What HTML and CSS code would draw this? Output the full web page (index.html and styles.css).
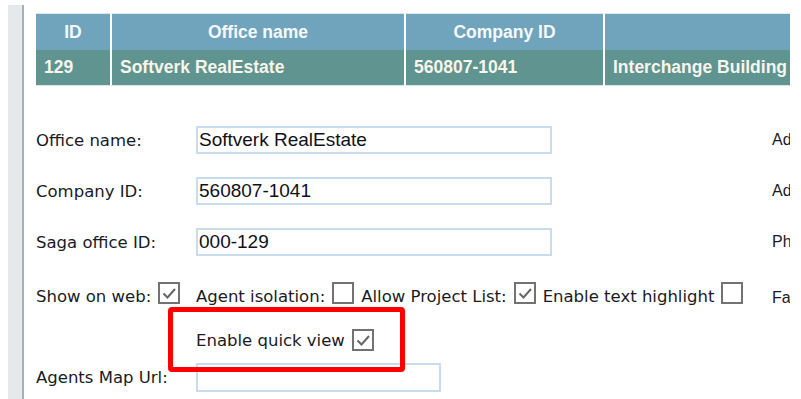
FILE: index.html
```html
<!DOCTYPE html>
<html>
<head>
	<title>Office settings</title>
	<link rel="stylesheet" href="styles.css">
</head>
<body>
	<div class="page">
		<div class="rail"></div>
		<div class="main">
			<table class="offices">
				<colgroup>
					<col class="c_id">
					<col class="c_name">
					<col class="c_company">
					<col class="c_address">
				</colgroup>
				<thead>
					<tr>
						<th>ID</th>
						<th>Office name</th>
						<th>Company ID</th>
						<th></th>
					</tr>
				</thead>
				<tbody>
					<tr>
						<td>129</td>
						<td>Softverk RealEstate</td>
						<td>560807-1041</td>
						<td>Interchange Building</td>
					</tr>
				</tbody>
			</table>

			<div class="form">
				<div class="row first">
					<label class="lbl">Office name:</label>
					<div class="field"><input class="text" type="text" value="Softverk RealEstate"></div>
					<label class="side">Address:</label>
				</div>
				<div class="row">
					<label class="lbl">Company ID:</label>
					<div class="field"><input class="text" type="text" value="560807-1041"></div>
					<label class="side">Address 2:</label>
				</div>
				<div class="row">
					<label class="lbl">Saga office ID:</label>
					<div class="field"><input class="text" type="text" value="000-129"></div>
					<label class="side">Phone:</label>
				</div>
				<div class="row checks">
					<div class="inline">
						<span>Show on web:</span>
						<span class="box on"><svg width="19" height="19" viewBox="0 0 19 19"><path d="M3.5 9.5 L7.5 13.5 L15 5" fill="none" stroke="#666" stroke-width="2"/></svg></span>
					</div>
					<div class="inline">
						<span>Agent isolation:</span>
						<span class="box"></span>
						<span>Allow Project List:</span>
						<span class="box on"><svg width="19" height="19" viewBox="0 0 19 19"><path d="M3.5 9.5 L7.5 13.5 L15 5" fill="none" stroke="#666" stroke-width="2"/></svg></span>
						<span>Enable text highlight</span>
						<span class="box"></span>
					</div>
					<label class="side">Fax:</label>
				</div>
				<div class="row quick">
					<div></div>
					<div class="inline">
						<span>Enable quick view</span>
						<span class="box on"><svg width="19" height="19" viewBox="0 0 19 19"><path d="M3.5 9.5 L7.5 13.5 L15 5" fill="none" stroke="#666" stroke-width="2"/></svg></span>
					</div>
				</div>
				<div class="row map">
					<label class="lbl">Agents Map Url:</label>
					<div class="field"><input class="text short" type="text" value=""></div>
				</div>
			</div>

			<div class="highlight"></div>
		</div>
	</div>
</body>
</html>
```

FILE: styles.css
```css
body {
	margin: 0;
	background-color: white;
}

.page {
	display: flex;
	height: 399px;
	box-sizing: border-box;
	padding-top: 5px;
	padding-left: 8px;
	overflow: hidden;
}

.rail {
	width: 14px;
	background-color: #e7e8ea;
	border-right: 2px solid #9fb0bf;
}

.main {
	position: relative;
	width: 754px;
	margin-left: 12px;
	padding-top: 8px;
	overflow: hidden;
}

/* office list */

table.offices {
	table-layout: fixed;
	width: 900px;
	border-collapse: separate;
	border-spacing: 0;
	font-family: "Liberation Sans", Arial, sans-serif;
	font-size: 17.5px;
	font-weight: bold;
}

.c_id { width: 74px; }
.c_name { width: 294px; }
.c_company { width: 199px; }
.c_address { width: 333px; }

.offices th, .offices td {
	padding: 0 0 0 8px;
	white-space: nowrap;
	overflow: hidden;
}

.offices th + th, .offices td + td {
	border-left: 2px solid white;
}

.offices thead th {
	height: 36px;
	padding: 0;
	text-align: center;
	color: #f6f9fb;
	background-color: #70a4bc;
	border-top: 1px solid #dde8ee;
}

.offices tbody td {
	height: 35px;
	text-align: left;
	color: #f8f5ea;
	background-color: #5f9490;
	border-bottom: 1px solid #dfe4e3;
}

/* form */

.form {
	font-family: "DejaVu Sans", Verdana, sans-serif;
	font-size: 16.5px;
	color: #1a1a24;
}

.row {
	display: grid;
	grid-template-columns: 160px 576px 1fr;
	align-items: center;
	margin-top: 23px;
}

.row.first {
	margin-top: 40px;
}

.row.checks {
	margin-top: 26px;
	align-items: end;
}

.row.quick {
	margin-top: 22px;
	align-items: end;
}

.row.map {
	margin-top: 12px;
}

.side {
	font-family: "Liberation Sans", Arial, sans-serif;
	font-size: 16px;
	white-space: nowrap;
}

.text {
	box-sizing: border-box;
	width: 356px;
	height: 28px;
	margin: 0;
	padding: 0 0 0 1px;
	border: 2px solid #c9dcee;
	font-family: "Liberation Sans", Arial, sans-serif;
	font-size: 19px;
	color: #101018;
	outline: none;
}

.text.short {
	width: 245px;
	height: 29px;
}

.inline {
	display: flex;
	align-items: flex-end;
	gap: 7px;
	line-height: 20px;
	white-space: nowrap;
}

.box {
	display: block;
	flex: none;
	box-sizing: border-box;
	width: 22px;
	height: 22px;
	border: 2px solid #727272;
	background-color: white;
	margin-bottom: 3px;
}

.quick .box {
	margin-bottom: 0;
}

.box svg {
	display: block;
}

/* annotation */

.highlight {
	position: absolute;
	left: 132px;
	top: 302px;
	width: 237px;
	height: 65px;
	box-sizing: border-box;
	border: 5px solid #ff0000;
	border-radius: 4px;
}
```
